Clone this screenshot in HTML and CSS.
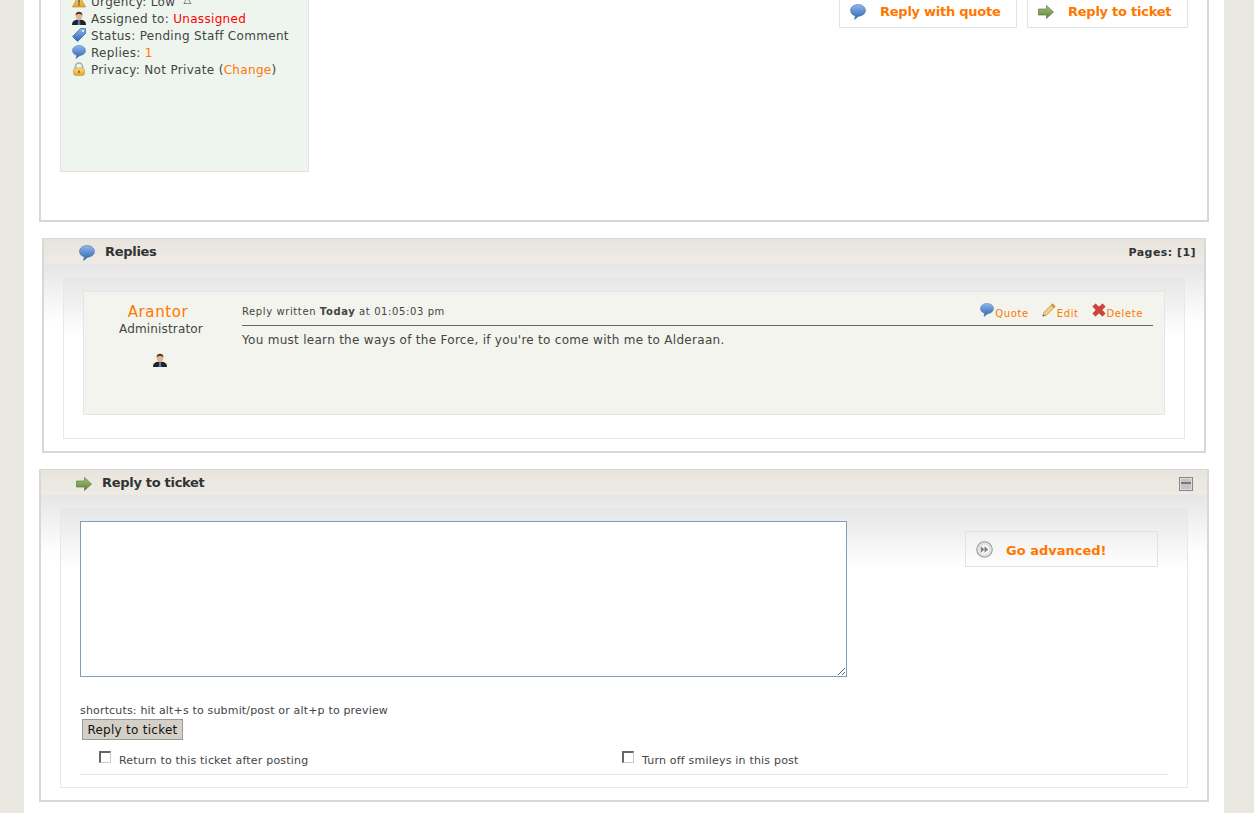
FILE: index.html
```html
<!DOCTYPE html>
<html lang="en">
<head>
    <meta charset="UTF-8">
    <title>Ticket</title>
    <link rel="stylesheet" href="styles.css">
</head>
<body>
    <svg class="sprites" width="0" height="0">
        <defs>
            <linearGradient id="blue" x1="0" y1="0" x2="0" y2="1"><stop offset="0" stop-color="#8db8e8"/><stop offset="1" stop-color="#2f62b0"/></linearGradient>
            <linearGradient id="green" x1="0" y1="0" x2="0" y2="1"><stop offset="0" stop-color="#a9c481"/><stop offset="1" stop-color="#5c7f35"/></linearGradient>
            <linearGradient id="gold" x1="0" y1="0" x2="0" y2="1"><stop offset="0" stop-color="#f8df7c"/><stop offset="1" stop-color="#dfa52c"/></linearGradient>
            <symbol id="i-bubble" viewBox="0 0 16 16"><path d="M8 .5C3.800 .5 .5 3 .5 6.400c0 2.600 2 4.700 4.800 5.400L4.500 15.500l4.300-3.300c3.900-.3 6.700-2.800 6.700-5.800C15.500 3 12.200 .5 8 .5z" fill="url(#blue)" stroke="#3d6cb3" stroke-width=".5"/></symbol>
            <symbol id="i-arrow" viewBox="0 0 16 16"><path d="M.5 5h8V1.500L15.500 8l-7 6.500V11h-8z" fill="url(#green)" stroke="#5f7d3c" stroke-width=".7"/></symbol>
            <symbol id="i-user" viewBox="0 0 14 14"><path d="M0 14c0-3.500 2.200-4.800 4.500-5.200h5C11.800 9.200 14 10.500 14 14z" fill="#222"/><path d="M6 9h2l.5 5h-3z" fill="#4a78b0"/><circle cx="7" cy="5" r="3.300" fill="#e8b48a"/><path d="M3.500 4.500C3.500 1.800 5 .8 7 .8s3.500 1 3.500 3.700C9.500 3 8 3 7 3S4.500 3 3.500 4.500z" fill="#5a3a20"/></symbol>
            <symbol id="i-tag" viewBox="0 0 14 14"><path d="M8.500.5h5v5L5.500 13.500.5 8.500z" fill="url(#blue)" stroke="#2f62b0" stroke-width=".7"/><circle cx="11" cy="3" r="1" fill="#fff"/></symbol>
            <symbol id="i-lock" viewBox="0 0 14 14"><path d="M3.500 7V4.500a3.500 3.500 0 0 1 7 0V7" fill="none" stroke="#aaa" stroke-width="1.600"/><rect x="1.500" y="6" width="11" height="7.500" rx="2.500" fill="url(#gold)" stroke="#c8923a" stroke-width=".6"/><rect x="6.300" y="8.500" width="1.400" height="2.600" fill="#8a5a10"/></symbol>
            <symbol id="i-warn" viewBox="0 0 14 14"><path d="M7 .8 13.500 13H.5z" fill="url(#gold)" stroke="#c8923a" stroke-width=".7"/><rect x="6.300" y="5" width="1.400" height="4.500" fill="#654"/><rect x="6.300" y="10.200" width="1.400" height="1.400" fill="#654"/></symbol>
            <symbol id="i-pencil" viewBox="0 0 14 14"><path d="M10.500.8 13.200 3.500 4.500 12.200.8 13.200 1.800 9.500z" fill="#f3d27e" stroke="#b98a45" stroke-width=".7"/><path d="M10.500.8 13.200 3.500 11.700 5 9 2.300z" fill="#e8813a"/><path d="M.8 13.200 1.300 11.200 2.800 12.700z" fill="#555"/></symbol>
            <symbol id="i-cross" viewBox="0 0 14 14"><path d="M3.500.8 7 4l3.500-3.200 2.700 2.700L10 7l3.200 3.500-2.700 2.700L7 10l-3.500 3.200-2.700-2.700L4 7 .8 3.500z" fill="#d0433a" stroke="#a5332b" stroke-width=".5"/></symbol>
            <symbol id="i-ffwd" viewBox="0 0 16 16"><circle cx="8" cy="8" r="7.300" fill="#e6e6e6" stroke="#999" stroke-width="1"/><circle cx="8" cy="8" r="5.200" fill="#f6f6f6" stroke="#ccc" stroke-width=".6"/><path d="M4.500 5v6L8 8zM8 5v6l3.500-3z" fill="#808080"/></symbol>
        </defs>
    </svg>

    <div class="wrap">
        <section class="panel top-panel">
            <aside class="info">
                <div class="info-row"><svg class="icon"><use href="#i-warn"/></svg>Urgency: Low <span class="low">△</span></div>
                <div class="info-row"><svg class="icon"><use href="#i-user"/></svg>Assigned to:&nbsp;<span class="red">Unassigned</span></div>
                <div class="info-row"><svg class="icon"><use href="#i-tag"/></svg>Status: Pending Staff Comment</div>
                <div class="info-row"><svg class="icon"><use href="#i-bubble"/></svg>Replies:&nbsp;<a href="#">1</a></div>
                <div class="info-row"><svg class="icon"><use href="#i-lock"/></svg>Privacy: Not Private (<a href="#">Change</a>)</div>
            </aside>
            <div class="actions">
                <a class="btn-box btn-quote" href="#"><svg class="btn-icon"><use href="#i-bubble"/></svg>Reply with quote</a>
                <a class="btn-box btn-reply" href="#"><svg class="btn-icon"><use href="#i-arrow"/></svg>Reply to ticket</a>
            </div>
        </section>

        <section class="panel replies">
            <header class="panel-head">
                <svg class="head-icon"><use href="#i-bubble"/></svg>
                <h2>Replies</h2>
                <span class="pages">Pages: [1]</span>
            </header>
            <div class="panel-body">
                <div class="inner">
                    <article class="post">
                        <div class="poster">
                            <a class="poster-name" href="#">Arantor</a>
                            <div class="poster-role">Administrator</div>
                            <svg class="poster-icon"><use href="#i-user"/></svg>
                        </div>
                        <div class="post-main">
                            <div class="post-head">
                                <span class="post-date">Reply written <strong>Today</strong> at 01:05:03 pm</span>
                                <span class="post-links">
                                    <a href="#"><svg class="link-icon"><use href="#i-bubble"/></svg>Quote</a>
                                    <a href="#"><svg class="link-icon"><use href="#i-pencil"/></svg>Edit</a>
                                    <a href="#"><svg class="link-icon"><use href="#i-cross"/></svg>Delete</a>
                                </span>
                            </div>
                            <p class="post-text">You must learn the ways of the Force, if you're to come with me to Alderaan.</p>
                        </div>
                    </article>
                </div>
            </div>
        </section>

        <section class="panel reply-form">
            <header class="panel-head">
                <svg class="head-icon"><use href="#i-arrow"/></svg>
                <h2>Reply to ticket</h2>
                <span class="collapse"></span>
            </header>
            <div class="panel-body">
                <form class="inner">
                    <div class="form-top">
                        <textarea class="reply-text"></textarea>
                        <a class="btn-box btn-advanced" href="#"><svg class="btn-icon"><use href="#i-ffwd"/></svg>Go advanced!</a>
                    </div>
                    <div class="shortcuts">shortcuts: hit alt+s to submit/post or alt+p to preview</div>
                    <button class="submit" type="button">Reply to ticket</button>
                    <div class="options">
                        <label class="option"><input type="checkbox">Return to this ticket after posting</label>
                        <label class="option"><input type="checkbox">Turn off smileys in this post</label>
                    </div>
                </form>
            </div>
        </section>
    </div>
</body>
</html>
```

FILE: styles.css
```css
html, body {
    height: 813px;
    overflow: hidden;
}

body {
    margin: 0;
    background: #e8e8e0;
    font-family: "DejaVu Sans", Verdana, sans-serif;
    font-size: 12px;
    color: #444;
}

a {
    color: #f70;
    text-decoration: none;
}

.sprites {
    display: block;
    height: 0;
}

.wrap {
    margin: -40px 30px 0 24px;
    width: 1200px;
    height: 860px;
    padding: 0 15px;
    box-sizing: border-box;
    background: #fff;
}

.panel {
    border: 2px solid #d8d8d8;
    border-top-width: 1px;
    background: #fff;
}

.top-panel {
    display: flex;
    justify-content: space-between;
    padding: 0 19px 48px;
}

.info {
    width: 249px;
    height: 211px;
    padding: 32px 0 0 11px;
    box-sizing: border-box;
    background: #eef5ef;
    border: 1px solid #e3e3e3;
    line-height: 17px;
    letter-spacing: .32px;
}

.info-row {
    display: flex;
    align-items: center;
    height: 17px;
    white-space: pre;
}

.icon {
    width: 14px;
    height: 14px;
    margin: -3px 5px 0 0;
    flex: none;
}

.low {
    margin-left: 4px;
    font-size: 10px;
    line-height: 10px;
    margin-top: -6px;
}

.red {
    color: #f00;
}

.actions {
    display: flex;
    gap: 10px;
    margin-top: 31px;
    align-self: flex-start;
}

.btn-box {
    display: flex;
    align-items: center;
    height: 36px;
    box-sizing: border-box;
    border: 1px solid #e3e3e3;
    font-weight: bold;
    font-size: 13px;
    letter-spacing: -.25px;
    padding-top: 3px;
}

.btn-quote {
    width: 178px;
}

.btn-reply {
    width: 161px;
}

.btn-icon {
    width: 16px;
    height: 16px;
    margin: 0 14px 0 10px;
    flex: none;
}

.replies {
    margin: 16px 3px;
}

.panel-head {
    display: flex;
    align-items: center;
    height: 25px;
    padding: 0 8px 0 35px;
    background: linear-gradient(#e8e3dd, #eeebe5);
}

.head-icon {
    width: 16px;
    height: 16px;
    margin-right: 10px;
    margin-top: 3px;
    flex: none;
}

.panel-head h2 {
    margin: 0;
    font-size: 13px;
    font-weight: bold;
    letter-spacing: -.3px;
    color: #333;
}

.pages {
    margin: 2px 0 0 auto;
    font-size: 11px;
    font-weight: bold;
    letter-spacing: .45px;
    color: #333;
}

.panel-body {
    padding: 13px 19px 12px;
    background: linear-gradient(#e6e6e6, #fff 60px) no-repeat;
}

.inner {
    display: block;
    padding: 13px 19px 23px;
    border: 1px solid #e8e8e8;
    background: linear-gradient(#e6e6e6, #fff 60px) no-repeat;
}

.post {
    display: flex;
    height: 124px;
    box-sizing: border-box;
    background: #f3f4ee;
    border: 1px solid #e5e5e5;
}

.poster {
    width: 154px;
    flex: none;
    text-align: center;
    padding-top: 12px;
}

.poster-name {
    display: block;
    padding-right: 6px;
    font-size: 15px;
    letter-spacing: .6px;
    line-height: 17px;
}

.poster-role {
    line-height: 16px;
    letter-spacing: .15px;
}

.poster-icon {
    display: block;
    width: 14px;
    height: 14px;
    margin: 16px 0 0 69px;
}

.post-main {
    width: 911px;
    margin-left: 4px;
}

.post-head {
    display: flex;
    justify-content: space-between;
    align-items: flex-end;
    height: 34px;
    box-sizing: border-box;
    padding: 0 10px 8px 0;
    border-bottom: 1px solid #666;
    font-size: 10px;
    letter-spacing: .6px;
}

.post-links {
    display: flex;
    gap: 13px;
    margin-bottom: -2px;
}

.post-links a {
    display: flex;
    align-items: flex-end;
}

.link-icon {
    width: 14px;
    height: 14px;
    margin: 0 1px 2px 0;
}

.post-text {
    margin: 7px 0 0;
    letter-spacing: .29px;
}

.reply-form {
    margin-top: 16px;
}

.reply-form .inner {
    padding: 12px 19px 13px;
    height: 280px;
    box-sizing: border-box;
}

.collapse {
    display: block;
    margin: 3px 6px 0 auto;
    width: 14px;
    height: 14px;
    box-sizing: border-box;
    border: 1px solid #888;
    background: #c4c4c4;
    box-shadow: inset 0 0 0 1px #ddd;
    position: relative;
}

.collapse::after {
    content: "";
    position: absolute;
    left: 1px;
    right: 1px;
    top: 4px;
    height: 2px;
    background: #777;
}

.form-top {
    display: flex;
    align-items: flex-start;
}

.reply-text {
    display: block;
    width: 767px;
    height: 156px;
    box-sizing: border-box;
    padding: 2px;
    margin: 0;
    border: 1px solid #7f9db9;
    background: #fff;
    outline: none;
}

.btn-advanced {
    width: 193px;
    margin: 10px 0 0 118px;
    letter-spacing: 0;
}

.btn-advanced .btn-icon {
    width: 17px;
    height: 17px;
    margin: -3px 13px 0 10px;
}

.shortcuts {
    margin-top: 27px;
    font-size: 11px;
    line-height: 13px;
    letter-spacing: .17px;
}

.submit {
    display: block;
    margin: 2px 0 0 2px;
    width: 101px;
    height: 21px;
    padding: 0;
    border: 1px solid #999;
    background: #d4d0c8;
    color: #111;
    font-family: inherit;
    font-size: 12px;
    letter-spacing: .27px;
}

.options {
    display: flex;
    margin-top: 14px;
    padding: 0 0 6px 19px;
    border-bottom: 1px solid #e5e5e5;
}

.option {
    display: flex;
    align-items: flex-start;
    width: 523px;
    font-size: 11px;
    line-height: 14px;
    letter-spacing: .2px;
}

.option input {
    appearance: none;
    width: 12px;
    height: 12px;
    margin: -3px 8px 0 0;
    box-sizing: border-box;
    background: #fff;
    border: 1px solid #ccc9bf;
    border-top: 2px solid #666;
    border-left: 2px solid #666;
    flex: none;
}
```
